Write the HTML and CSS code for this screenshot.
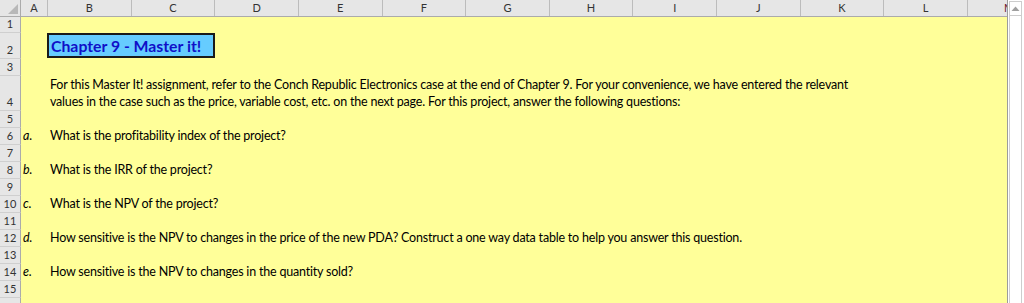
FILE: index.html
```html
<!DOCTYPE html>
<html>
<head>
<meta charset="utf-8">
<link rel="stylesheet" href="styles.css">
</head>
<body>
<div class="app">
  <div class="sheet">
    <div class="colhead">
      <div class="corner"><svg width="20" height="16" viewBox="0 0 20 16"><polygon points="18,4 18,14 8,14" fill="#b8b8b8"/></svg></div>
      <div class="ch cha">A</div>
      <div class="ch">B</div>
      <div class="ch">C</div>
      <div class="ch">D</div>
      <div class="ch">E</div>
      <div class="ch">F</div>
      <div class="ch">G</div>
      <div class="ch">H</div>
      <div class="ch">I</div>
      <div class="ch">J</div>
      <div class="ch">K</div>
      <div class="ch">L</div>
      <div class="ch chm">M</div>
    </div>

    <div class="row h16"><div class="rh">1</div><div class="cells"></div></div>
    <div class="row h26"><div class="rh">2</div><div class="cells top"><div class="lbl"></div><div class="title">Chapter 9 - Master it!</div></div></div>
    <div class="row"><div class="rh">3</div><div class="cells"></div></div>
    <div class="row h35"><div class="rh">4</div><div class="cells"><div class="lbl"></div><div class="txt">For this Master It! assignment, refer to the Conch Republic Electronics case at the end of Chapter 9. For your convenience, we have entered the relevant<br>values in the case such as the price, variable cost, etc. on the next page. For this project, answer the following questions:</div></div></div>
    <div class="row"><div class="rh">5</div><div class="cells"></div></div>
    <div class="row"><div class="rh">6</div><div class="cells"><div class="lbl">a.</div><div class="txt">What is the profitability index of the project?</div></div></div>
    <div class="row"><div class="rh">7</div><div class="cells"></div></div>
    <div class="row"><div class="rh">8</div><div class="cells"><div class="lbl">b.</div><div class="txt">What is the IRR of the project?</div></div></div>
    <div class="row"><div class="rh">9</div><div class="cells"></div></div>
    <div class="row"><div class="rh">10</div><div class="cells"><div class="lbl">c.</div><div class="txt">What is the NPV of the project?</div></div></div>
    <div class="row"><div class="rh">11</div><div class="cells"></div></div>
    <div class="row"><div class="rh">12</div><div class="cells"><div class="lbl">d.</div><div class="txt">How sensitive is the NPV to changes in the price of the new PDA? Construct a one way data table to help you answer this question.</div></div></div>
    <div class="row"><div class="rh">13</div><div class="cells"></div></div>
    <div class="row"><div class="rh">14</div><div class="cells"><div class="lbl">e.</div><div class="txt">How sensitive is the NPV to changes in the quantity sold?</div></div></div>
    <div class="row"><div class="rh">15</div><div class="cells"></div></div>
    <div class="row"><div class="rh"></div><div class="cells"></div></div>
  </div>
  <div class="vscroll">
    <div class="track">
      <div class="up"><svg width="9" height="6" viewBox="0 0 9 6"><polygon points="4.5,0.5 8.5,5 0.5,5" fill="#a0a0a0"/></svg></div>
    </div>
  </div>
</div>
</body>
</html>
```
FILE: styles.css
```css
* { box-sizing: border-box; }
html, body { margin: 0; padding: 0; }
body {
  width: 1024px;
  height: 303px;
  overflow: hidden;
  background: #ffffff;
  font-family: Lato, "Open Sans", sans-serif;
}
.app {
  display: flex;
  height: 303px;
}
.sheet {
  width: 1008px;
  flex: 0 0 1008px;
  display: flex;
  flex-direction: column;
  overflow: hidden;
  border-right: 1px solid #9c9c9c;
  background: #ffff99;
}
.colhead {
  display: flex;
  flex: 0 0 17px;
  height: 17px;
  background: #e6e6e6;
  border-bottom: 1px solid #ababab;
  white-space: nowrap;
}
.corner {
  flex: 0 0 21px;
  border-right: 1px solid #ababab;
  display: flex;
}
.ch {
  flex: 0 0 83.64px;
  border-right: 1px solid #bcbcbc;
  text-align: center;
  font-size: 11px;
  line-height: 16px;
  color: #333333;
}
.ch.cha { flex-basis: 27px; }
.ch.chm { flex: 0 0 83.64px; color: #6a2030; }

.row {
  display: flex;
  flex: 0 0 17px;
  height: 17px;
}
.row.h16 { flex-basis: 16px; height: 16px; }
.row.h26 { flex-basis: 26px; height: 26px; }
.row.h35 { flex-basis: 35px; height: 35px; }
.rh {
  flex: 0 0 21px;
  background: #e6e6e6;
  border-right: 1px solid #ababab;
  border-bottom: 1px solid #cfcfcf;
  display: flex;
  align-items: flex-end;
  justify-content: center;
  font-size: 11px;
  line-height: 16px;
  color: #333333;
}
.cells {
  flex: 1;
  display: flex;
  align-items: flex-end;
  padding-bottom: 1px;
  background: #ffff99;
  font-size: 12.5px;
  letter-spacing: -0.2px;
  line-height: 17px;
  color: #000000;
  white-space: nowrap;
}
.cells.top { align-items: flex-start; padding-bottom: 0; }
.lbl {
  flex: 0 0 26px;
  padding-left: 2px;
  font-style: italic;
  letter-spacing: 0;
}
.txt {
  padding-left: 3px;
}
.title {
  width: 168px;
  height: 25px;
  background: #66ccff;
  border: 2px solid #1a1a1a;
  color: #1010c8;
  font-weight: 700;
  font-size: 15.8px;
  letter-spacing: 0;
  line-height: 21px;
  padding-left: 2px;
}

.vscroll {
  flex: 1;
  display: flex;
  padding: 1px 2px 0 1px;
  background: #ffffff;
}
.track {
  flex: 1;
  border-left: 1px solid #cdcdcd;
  border-right: 1px solid #cdcdcd;
  display: flex;
  flex-direction: column;
}
.up {
  height: 15px;
  border: 1px solid #cdcdcd;
  margin: 0 -1px;
  display: flex;
  align-items: center;
  justify-content: center;
  background: #ffffff;
}
```
